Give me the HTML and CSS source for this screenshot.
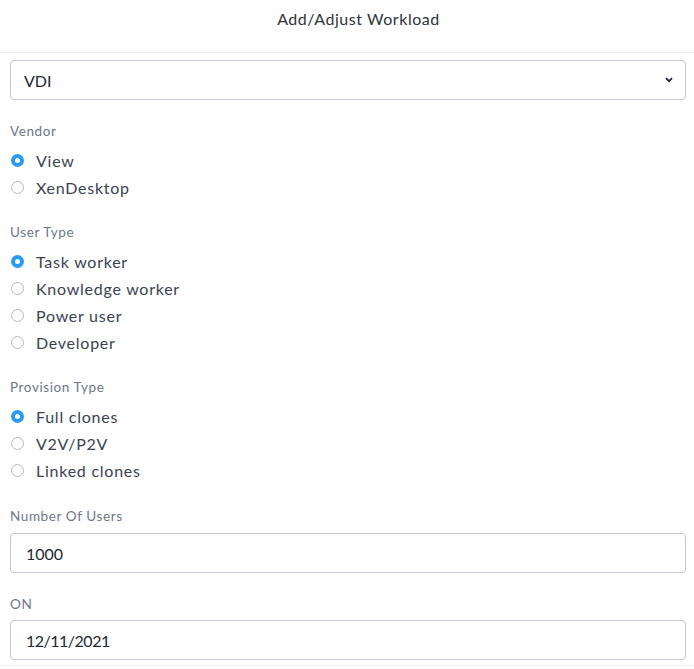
FILE: index.html
```html
<!DOCTYPE html>
<html lang="en">
<head>
<meta charset="utf-8">
<title>Add/Adjust Workload</title>
<link rel="stylesheet" href="styles.css">
</head>
<body>
<div class="modal">
  <header class="modal-header">Add/Adjust Workload</header>
  <form class="modal-body">
    <div class="select-box">
      <span class="select-value">VDI</span>
      <svg class="chevron" width="8" height="6" viewBox="0 0 8 6"><path d="M1 1.2 L4 4.2 L7 1.2" fill="none" stroke="#1d2430" stroke-width="1.8"/></svg>
    </div>

    <div class="group">
      <div class="group-label">Vendor</div>
      <label class="radio"><span class="dot checked"></span>View</label>
      <label class="radio"><span class="dot"></span>XenDesktop</label>
    </div>

    <div class="group">
      <div class="group-label">User Type</div>
      <label class="radio"><span class="dot checked"></span>Task worker</label>
      <label class="radio"><span class="dot"></span>Knowledge worker</label>
      <label class="radio"><span class="dot"></span>Power user</label>
      <label class="radio"><span class="dot"></span>Developer</label>
    </div>

    <div class="group">
      <div class="group-label">Provision Type</div>
      <label class="radio"><span class="dot checked"></span>Full clones</label>
      <label class="radio"><span class="dot"></span>V2V/P2V</label>
      <label class="radio"><span class="dot"></span>Linked clones</label>
    </div>

    <div class="group field-group">
      <div class="group-label users-label">Number Of Users</div>
      <div class="text-box">1000</div>
    </div>

    <div class="group date-group">
      <div class="group-label date-label">ON</div>
      <div class="text-box date-value">12/11/2021</div>
    </div>
  </form>
  <div class="modal-footer"></div>
</div>
</body>
</html>
```

FILE: styles.css
```css
html, body {
  margin: 0;
  padding: 0;
  background: #ffffff;
}

body {
  font-family: "Lato", "Open Sans", sans-serif;
  color: #3a4250;
}

.modal {
  width: 694px;
}

.modal-header {
  padding: 9px 0 23px 23px;
  line-height: 20px;
  font-size: 16px;
  letter-spacing: 0.55px;
  text-align: center;
  color: #2e333b;
  border-bottom: 1px solid #eceef1;
}

.modal-body {
  padding: 7px 8px 5px 10px;
  display: flex;
  flex-direction: column;
}

.select-box {
  height: 40px;
  box-sizing: border-box;
  border: 1px solid #c3c7d1;
  border-radius: 4px;
  display: flex;
  align-items: center;
  justify-content: space-between;
  padding: 0 12px 0 13px;
  font-size: 16px;
  color: #22272f;
}

.chevron {
  display: block;
}

.group {
  margin-top: 23px;
  display: flex;
  flex-direction: column;
}

.group-label {
  font-size: 13.5px;
  line-height: 16px;
  letter-spacing: 0.6px;
  color: #6c7788;
  margin-bottom: 8px;
}

.field-group {
  margin-top: 24px;
}

.users-label {
  margin-bottom: 9px;
}

.date-label {
  margin-bottom: 8px;
}

.radio {
  display: flex;
  align-items: center;
  height: 27px;
  font-size: 16px;
  letter-spacing: 0.75px;
  color: #3a4250;
}

.dot {
  width: 13px;
  height: 13px;
  box-sizing: border-box;
  border: 1px solid #b3bac6;
  border-radius: 50%;
  margin: 0 12px 0 1px;
  background: #fff;
}

.dot.checked {
  border: 4px solid #2b9af3;
  background: #fff;
}

.text-box {
  height: 40px;
  box-sizing: border-box;
  border: 1px solid #c3c7d1;
  border-radius: 4px;
  display: flex;
  align-items: center;
  padding: 0 15px;
  font-size: 16px;
  color: #22272f;
}

.date-value {
  letter-spacing: -0.5px;
}

.modal-footer {
  border-top: 1px solid #eceef1;
  height: 10px;
}
```
